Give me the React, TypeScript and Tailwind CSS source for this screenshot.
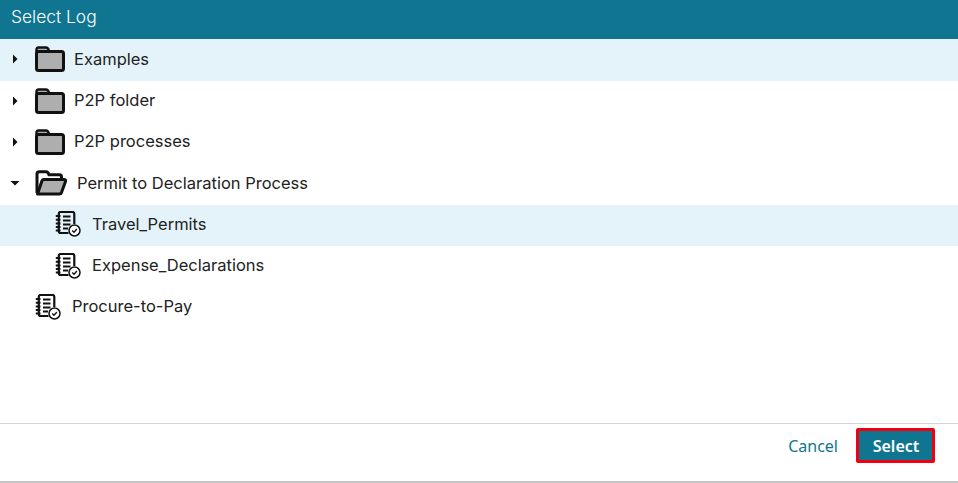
import React from "react";

const Caret = ({ open }: { open?: boolean }) => (
  <svg width="10" height="10" viewBox="0 0 10 10" className="shrink-0">
    {open ? <path d="M0.5 3 L9.5 3 L5 7.5 Z" fill="#111" /> : <path d="M3 0.5 L7.5 5 L3 9.5 Z" fill="#111" />}
  </svg>
);

const Folder = () => (
  <svg width="30" height="26" viewBox="0 0 30 26" className="block shrink-0">
    <path d="M1.5 6 V3.5 Q1.5 1.5 3.5 1.5 H11 Q13 1.5 14 4.8" fill="#aeaeae" stroke="#111" strokeWidth="2.4" />
    <rect x="1.5" y="5.5" width="27" height="19" rx="2" fill="#aeaeae" stroke="#111" strokeWidth="3" />
  </svg>
);

const FolderOpen = () => (
  <svg width="32" height="26" viewBox="0 0 32 26" className="block shrink-0">
    <path d="M2 23 V4 Q2 1.8 4.5 1.8 H11 Q13 1.8 14 4.8 H24.5 Q26.5 4.8 26.5 7 V10" fill="none" stroke="#111" strokeWidth="3" />
    <path d="M2.5 24 L7 10.8 Q7.5 9.5 9 9.5 H29 Q31 9.5 30.5 11.5 L26.5 22.5 Q26 24 24.5 24 Z" fill="#aeaeae" stroke="#111" strokeWidth="3" strokeLinejoin="round" />
  </svg>
);

const LogIcon = () => (
  <svg width="26" height="26" viewBox="0 0 26 26" className="block shrink-0">
    <path d="M13.5 22 H5.5 Q3.8 22 3.8 20 V2.8 Q3.8 1 5.5 1 H17.5 Q19.3 1 19.3 2.8 V13" fill="none" stroke="#111" strokeWidth="2.2" />
    <path d="M0.8 5 H5.5 M0.8 8.7 H5.5 M0.8 12.4 H5.5 M0.8 16.1 H5.5 M0.8 19.5 H5.5" stroke="#111" strokeWidth="2" />
    <path d="M8 5.5 H15.5 M8 9.5 H15.5 M8 13.5 H15.5 M8 17.5 H13" stroke="#111" strokeWidth="2" />
    <circle cx="19.5" cy="19.5" r="5.5" fill="#fff" stroke="#111" strokeWidth="1.5" />
    <path d="M17.2 19.5 L19 21.3 L21.9 18" fill="none" stroke="#111" strokeWidth="1.3" />
  </svg>
);

const Row = ({ active, first, pl, children }: { active?: boolean; first?: boolean; pl: string; children: React.ReactNode }) => (
  <div className={`flex items-center pb-[2.6px] text-[#222] ${first ? "h-[42.25px] pt-[1px]" : "h-[41.25px]"} ${pl} ${active ? "bg-[#e4f3f9]" : ""}`}>{children}</div>
);

export default function App() {
  return (
    <div className="flex h-[483px] w-[958px] flex-col overflow-hidden bg-white font-['Inter',sans-serif] text-[16.5px]">
      <div className="flex h-[39px] shrink-0 items-center bg-[#107591] pb-[5px] pl-[11px] text-[17.4px] font-light text-white">Select Log</div>
      <div className="flex-1">
        <Row active first pl="pl-[10px]"><Caret /><span className="ml-[15px]"><Folder /></span><span className="ml-[9px]">Examples</span></Row>
        <Row pl="pl-[10px]"><Caret /><span className="ml-[15px]"><Folder /></span><span className="ml-[9px]">P2P folder</span></Row>
        <Row pl="pl-[10px]"><Caret /><span className="ml-[15px]"><Folder /></span><span className="ml-[9px]">P2P processes</span></Row>
        <Row pl="pl-[10px]"><Caret open /><span className="ml-[15px]"><FolderOpen /></span><span className="ml-[10px]">Permit to Declaration Process</span></Row>
        <Row active pl="pl-[55px]"><LogIcon /><span className="ml-[11px]">Travel_Permits</span></Row>
        <Row pl="pl-[55px]"><LogIcon /><span className="ml-[11px]">Expense_Declarations</span></Row>
        <Row pl="pl-[35px]"><LogIcon /><span className="ml-[11px]">Procure-to-Pay</span></Row>
      </div>
      <div className="flex h-[58px] shrink-0 items-center justify-end border-t border-[#d4d4d4] pr-[23px] pb-[15px] font-['Noto_Sans',sans-serif] text-[16px]">
        <span className="mr-[18px] mt-[1px] text-[#107591]">Cancel</span>
        <button className="flex h-[35px] w-[79px] items-center justify-center rounded-[2px] border-[3px] border-[#f00010] bg-[#107591] pt-[1px] pl-[1px] font-semibold text-white">Select</button>
      </div>
      <div className="h-[2px] shrink-0 bg-[#c4c4c4]" />
    </div>
  );
}
